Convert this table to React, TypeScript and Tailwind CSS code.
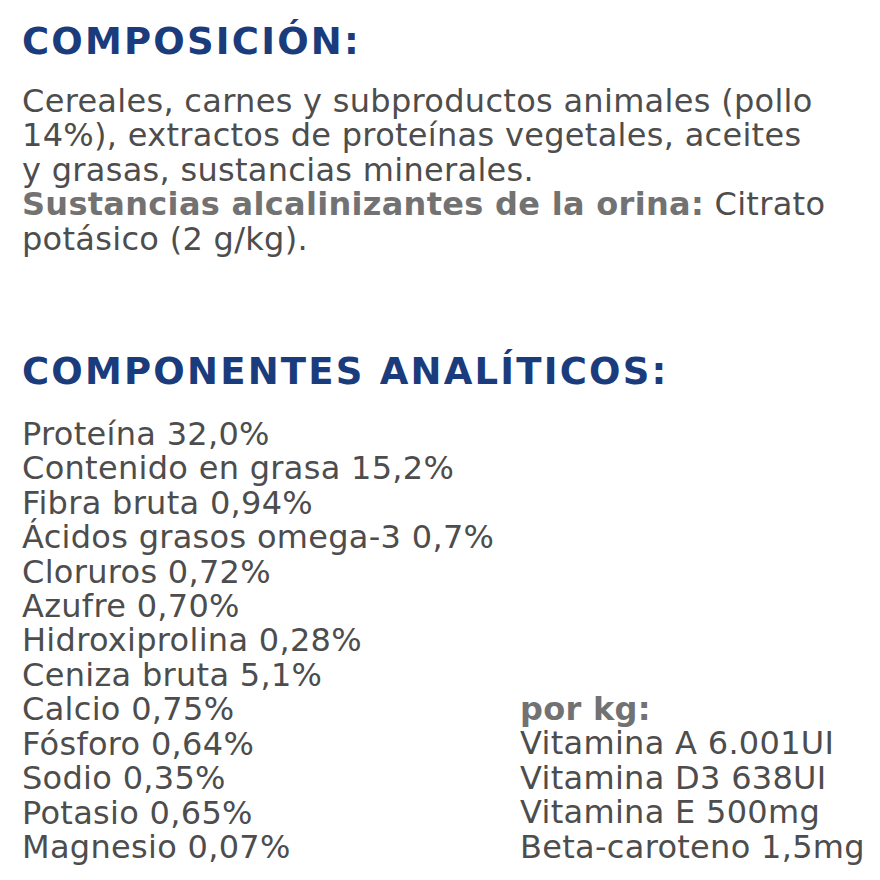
const analiticos = [
  "Proteína 32,0%",
  "Contenido en grasa 15,2%",
  "Fibra bruta 0,94%",
  "Ácidos grasos omega-3 0,7%",
  "Cloruros 0,72%",
  "Azufre 0,70%",
  "Hidroxiprolina 0,28%",
  "Ceniza bruta 5,1%",
  "Calcio 0,75%",
  "Fósforo 0,64%",
  "Sodio 0,35%",
  "Potasio 0,65%",
  "Magnesio 0,07%",
]

const vitaminas = [
  "Vitamina A 6.001UI",
  "Vitamina D3 638UI",
  "Vitamina E 500mg",
  "Beta-caroteno 1,5mg",
]

export default function App() {
  return (
    <div className="w-[880px] h-[880px] bg-white overflow-hidden pl-[22px] pt-[22px] font-['DejaVu_Sans',sans-serif]">
      {/* composicion */}
      <h2 className="text-[37px] leading-[40px] font-bold text-[#1a3c7c] tracking-[2.2px]">COMPOSICIÓN:</h2>
      <p className="mt-[22px] text-[32px] leading-[34.4px] tracking-[0.3px] text-[#4d4d4d] whitespace-nowrap">
        Cereales, carnes y subproductos animales (pollo<br />
        14%), extractos de proteínas vegetales, aceites<br />
        y grasas, sustancias minerales.<br />
        <span className="font-bold text-[#727272]">Sustancias alcalinizantes de la orina:</span> Citrato<br />
        potásico (2 g/kg).
      </p>

      {/* analiticos */}
      <h2 className="mt-[96px] text-[37px] leading-[40px] font-bold text-[#1a3c7c] tracking-[2.2px]">COMPONENTES ANALÍTICOS:</h2>
      <div className="mt-[25px] flex text-[32px] leading-[34.4px] tracking-[0.3px] text-[#4d4d4d] whitespace-nowrap">
        <ul className="w-[498px]">
          {analiticos.map((a) => (
            <li key={a}>{a}</li>
          ))}
        </ul>
        <ul className="mt-[275px]">
          <li className="font-bold text-[#727272]">por kg:</li>
          {vitaminas.map((v) => (
            <li key={v}>{v}</li>
          ))}
        </ul>
      </div>
    </div>
  )
}
